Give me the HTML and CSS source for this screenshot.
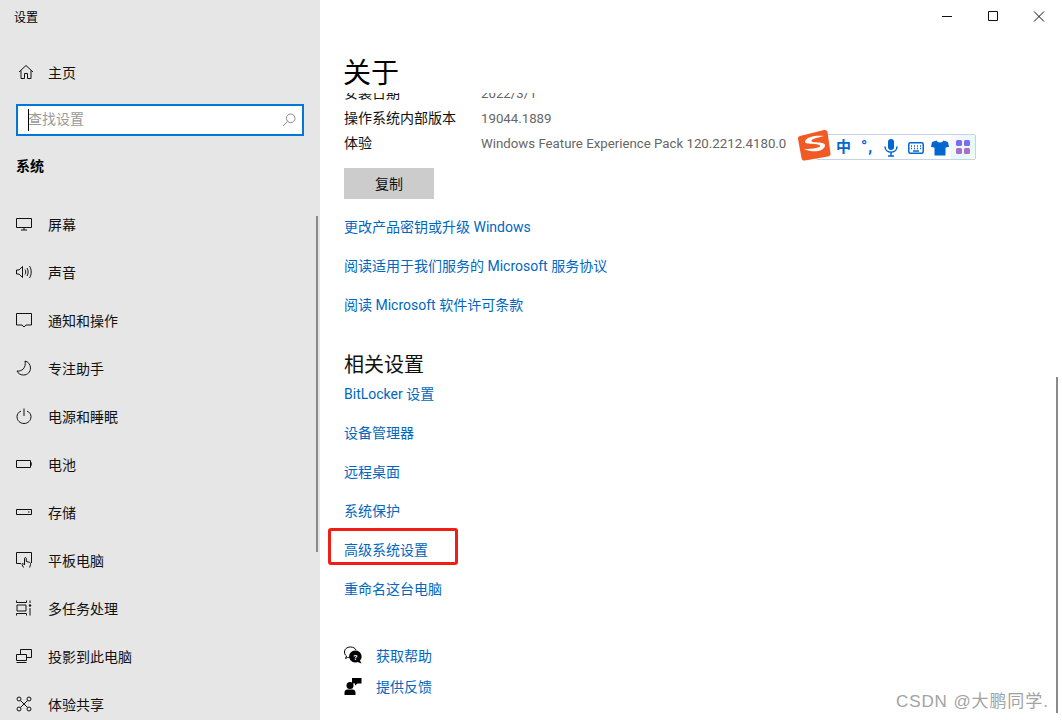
FILE: index.html
```html
<!DOCTYPE html>
<html lang="zh-CN">
<head>
<meta charset="utf-8">
<title>设置</title>
<link rel="stylesheet" href="styles.css">
</head>
<body>
<div class="app">
  <aside class="sidebar">
    <div class="app-title">设置</div>
    <a class="nav-item home">
      <svg class="icon" viewBox="0 0 16 16"><path d="M1 8 8 1.500 15 8M3 6.500V14.500H6.500V9.500H9.500V14.500H13V6.500"/></svg>
      <span>主页</span>
    </a>
    <div class="search">
      <span class="caret"></span>
      <span class="placeholder">查找设置</span>
      <svg class="search-icon" viewBox="0 0 14 14"><circle cx="8.700" cy="5.300" r="4.300"/><path d="M5.600 8.400 1 13"/></svg>
    </div>
    <div class="section-title">系统</div>
    <nav class="nav-list">
      <a class="nav-item"><svg class="icon" viewBox="0 0 16 16"><path d="M.5 2.500H15.500V11.500H.5ZM8 11.500V14M5 14H11"/></svg><span>屏幕</span></a>
      <a class="nav-item"><svg class="icon" viewBox="0 0 16 16"><path d="M.5 6H3L6.500 2.500V13.500L3 10H.5ZM9 5.500C10 7 10 9 9 10.500M11 4C12.500 6.500 12.500 9.500 11 12M13.500 2C15.800 5.500 15.800 10.500 13.500 14"/></svg><span>声音</span></a>
      <a class="nav-item"><svg class="icon" viewBox="0 0 16 16"><path d="M.5 1.500H15.500V13H10L8 15 6 13H.5Z"/></svg><span>通知和操作</span></a>
      <a class="nav-item"><svg class="icon" viewBox="0 0 16 16"><path d="M9 1C12 1.500 14.500 4.500 14.500 8 14.500 12 11.500 15 7.500 15 4.500 15 2 13.500 1 11 5.500 11.800 10.500 8 9 1Z"/></svg><span>专注助手</span></a>
      <a class="nav-item"><svg class="icon" viewBox="0 0 16 16"><path d="M5 3C2.500 4.200 1 6.300 1 8.700 1 12.500 4.100 15.500 8 15.500S15 12.500 15 8.700C15 6.300 13.500 4.200 11 3M8 .5V8"/></svg><span>电源和睡眠</span></a>
      <a class="nav-item"><svg class="icon" viewBox="0 0 16 16"><path d="M.5 4.500H14.500V11.500H.5ZM14.500 7H16V9H14.500"/></svg><span>电池</span></a>
      <a class="nav-item"><svg class="icon" viewBox="0 0 16 16"><path d="M.5 5.500H15.500V10.500H.5ZM12 8H13.500"/></svg><span>存储</span></a>
      <a class="nav-item"><svg class="icon" viewBox="0 0 16 16"><path d="M5 11.500H.5V.5H15.500V11M7.500 15.500 6 12.500C5.700 11.500 6.800 11 7.500 11.800L8.500 13V6.500C8.500 5.300 10.300 5.300 10.300 6.500V9.500L13.500 10.300C14.500 10.600 14.700 11.500 14.500 12.500L13.700 15.500"/></svg><span>平板电脑</span></a>
      <a class="nav-item"><svg class="icon" viewBox="0 0 16 16"><path d="M.5 .5V2.500H10.500V.5M.5 15.500V13.500H10.500V15.500M1 5H10V11H1ZM14 .5V3M14 8V15.500"/><circle class="dot" cx="14" cy="5.500" r="1.200"/></svg><span>多任务处理</span></a>
      <a class="nav-item"><svg class="icon" viewBox="0 0 16 16"><path d="M4.500 6V1.500H15.500V9.500H11M.5 6.500H10.500V12.500H.5ZM.5 14.500H10.500"/></svg><span>投影到此电脑</span></a>
      <a class="nav-item"><svg class="icon" viewBox="0 0 16 16"><circle cx="3" cy="3" r="2"/><circle cx="13" cy="3" r="2"/><circle cx="3" cy="13" r="2"/><circle cx="13" cy="13" r="2"/><path d="M4.500 4.500 11.500 11.500M11.500 4.500 4.500 11.500"/></svg><span>体验共享</span></a>
    </nav>
  </aside>

  <main class="content">
    <div class="window-controls">
      <svg class="win-btn" viewBox="0 0 46 32"><path d="M18 16.500H28"/></svg>
      <svg class="win-btn" viewBox="0 0 46 32"><path d="M18.500 11.500H27.500V20.500H18.500Z"/></svg>
      <svg class="win-btn" viewBox="0 0 46 32"><path d="M18 11.500 28 21.500M28 11.500 18 21.500"/></svg>
    </div>
    <h1 class="page-title">关于</h1>
    <div class="scroller">
      <dl class="specs">
        <div class="spec"><dt>安装日期</dt><dd>2022/3/1</dd></div>
        <div class="spec"><dt>操作系统内部版本</dt><dd>19044.1889</dd></div>
        <div class="spec"><dt>体验</dt><dd>Windows Feature Experience Pack 120.2212.4180.0</dd></div>
      </dl>
      <div class="copy-btn">复制</div>
      <ul class="links">
        <li>更改产品密钥或升级 Windows</li>
        <li>阅读适用于我们服务的 Microsoft 服务协议</li>
        <li>阅读 Microsoft 软件许可条款</li>
      </ul>
      <h2 class="section-heading">相关设置</h2>
      <ul class="links related">
        <li>BitLocker 设置</li>
        <li>设备管理器</li>
        <li>远程桌面</li>
        <li>系统保护</li>
        <li>高级系统设置</li>
        <li>重命名这台电脑</li>
      </ul>
      <div class="help-list">
        <a class="help-item">
          <svg class="help-icon" viewBox="0 0 18 18"><path class="outline" d="M8 10.500C7 11 5 11.500 3.500 11.500L1.500 12.500 2.500 10C1 9 .5 7.500 .5 6 .5 3 3 1 6.500 1 9 1 11 2 12 4"/><path d="M11.500 4.500A6 6 0 0 1 16 14.500L17.500 17.500 13.500 16A6 6 0 1 1 11.500 4.500Z"/><text class="q" x="11.500" y="14">?</text></svg>
          <span>获取帮助</span>
        </a>
        <a class="help-item">
          <svg class="help-icon" viewBox="0 0 18 18"><circle cx="6" cy="8.500" r="3.500"/><path d="M.5 18V15.500C.5 13.500 2 12.500 3.500 12.500H8.500C10 12.500 11.500 13.500 11.500 15.500V18ZM8 1H17.500V6.500H13.500L11 8.500V6.500H8Z"/></svg>
          <span>提供反馈</span>
        </a>
      </div>
    </div>
  </main>
</div>

<div class="sidebar-scroll"></div>
<div class="main-scroll"></div>
<div class="annotation"></div>

<div class="ime">
  <svg class="ime-logo" viewBox="0 0 34 32"><path class="ime-logo-bg" d="M3 7 27 1C29 .6 30 1.200 30.500 3L33.500 24C33.800 26 33 27 31 27.500L8 31.500C6 31.800 5 31 4.500 29L1 10C.6 8.500 1.500 7.500 3 7Z"/><path class="ime-logo-s" d="M27 7C19 6 9 8 8 12.500 7.200 16 21 14 23 16.500 24.500 18.500 16 20 7 20 15 24 27 23 28 16.500 28.500 12 15 14.500 14.500 12 14 10 21 8.500 27 7Z"/></svg>
  <span class="ime-zh">中</span>
  <span class="ime-punc">°,</span>
  <svg class="ime-icon" viewBox="0 0 16 18"><rect class="fill" x="5" y="0" width="6" height="11" rx="3"/><path d="M2 7.500C2 15 14 15 14 7.500M8 13V17M5 17H11"/></svg>
  <svg class="ime-icon wide" viewBox="0 0 16 14"><rect x=".8" y="1.800" width="14.400" height="10.400" rx="1.500"/><path d="M3 5H4M6 5H7M9 5H10M12 5H13M3 7.500H4M6 7.500H7M9 7.500H10M12 7.500H13M5 10H11"/></svg>
  <svg class="ime-icon" viewBox="0 0 18 16"><path class="fill" d="M5.500 .5 1 2 0 7 3.500 7.500V15.500H14.500V7.500L18 7 17 2 12.500 .5C11.500 3 6.500 3 5.500 .5Z"/></svg>
  <span class="ime-apps">
    <svg viewBox="0 0 14 14"><rect class="a1" x="0" y="0" width="6" height="6" rx="1.500"/><rect class="a1" x="8" y="0" width="6" height="6" rx="1.500"/><rect class="a2" x="0" y="8" width="6" height="6" rx="1.500"/><rect class="a2" x="8" y="8" width="6" height="6" rx="1.500"/></svg>
  </span>
</div>

<div class="watermark">CSDN @大鹏同学.</div>
</body>
</html>
```
FILE: styles.css
```css
* { box-sizing: border-box; }
html, body { margin: 0; height: 100%; overflow: hidden; background: #fff; }
body { font-family: Roboto, "Noto Sans CJK SC", sans-serif; font-size: 14px; color: #000; }
.app { display: flex; height: 720px; }

/* sidebar */
.sidebar { width: 320px; flex: none; background: #e6e6e6; padding-left: 16px; overflow: hidden; }
.app-title { font-size: 12px; line-height: 16px; padding-top: 10px; margin-left: -2px; height: 25px; }
.nav-item { display: flex; align-items: center; height: 48px; color: #111; }
.nav-item span { margin-left: 16px; }
.nav-item .icon { width: 16px; height: 16px; flex: none; fill: none; stroke: #111; stroke-width: 1; }
.icon .dot { fill: #111; stroke: none; }
.home { margin-top: 23px; height: 48px; margin-left: 2px; }
.home span { margin-left: 14px; }
.search { position: relative; display: flex; align-items: center; width: 288px; height: 32px; margin-top: 8px; background: #fff; border: 2px solid #0078d7; padding: 0 0 4px 10px; }
.caret { position: absolute; left: 10px; top: 3px; width: 1px; height: 22px; background: #000; }
.placeholder { color: #9a9a9a; }
.search-icon { position: absolute; right: 6px; top: 7px; width: 14px; height: 14px; fill: none; stroke: #8a8a8a; stroke-width: 1; }
.section-title { font-weight: 700; margin-top: 20px; line-height: 20px; }
.nav-list { padding-top: 24px; }

/* main */
.content { position: relative; flex: 1; min-width: 0; padding-left: 24px; overflow: hidden; display: flex; flex-direction: column; }
.window-controls { position: absolute; right: 0; top: 0; display: flex; }
.win-btn { width: 46px; height: 32px; fill: none; stroke: #111; stroke-width: 1; }
.page-title { margin: 0 0 0 -1px; height: 93px; padding-top: 54px; font-size: 28px; font-weight: 400; line-height: 39px; flex: none; }
.scroller { flex: 1; overflow: hidden; }
.specs { margin: -13px 0 0; }
.spec { display: flex; height: 25px; align-items: center; }
.spec dt { width: 137px; padding-bottom: 2px; color: #111; }
.spec dd { margin: 0; padding-top: 1px; color: #666; white-space: nowrap; font-size: 13.250px; }
.copy-btn { display: flex; align-items: center; justify-content: center; width: 90px; height: 31px; margin-top: 13px; padding-bottom: 2px; background: #ccc; color: #111; }
.links { list-style: none; margin: 9px 0 0; padding: 0; color: #0067c0; }
.links li { height: 39px; line-height: 39px; white-space: nowrap; }
.section-heading { margin: 26px 0 0; font-size: 20px; font-weight: 400; line-height: 28px; color: #111; }
.links.related { margin-top: -4px; }
.help-list { margin-top: 30px; color: #0067c0; }
.help-item { display: flex; align-items: center; height: 31px; }
.help-icon { width: 18px; height: 18px; flex: none; fill: #000; }
.help-icon .outline { fill: none; stroke: #000; }
.help-icon .q { fill: #fff; font-size: 8px; font-weight: 700; text-anchor: middle; }
.help-item span { margin-left: 14px; }

/* overlays */
.sidebar-scroll { position: absolute; left: 316px; top: 216px; width: 2px; height: 336px; background: #8a8a8a; }
.main-scroll { position: absolute; left: 1056px; top: 377px; width: 2px; height: 336px; background: #8a8a8a; }
.annotation { position: absolute; left: 328px; top: 528px; width: 130px; height: 37px; border: 3px solid #f01e14; border-radius: 3px; }

.ime { position: absolute; left: 816px; top: 134px; width: 160px; height: 26px; display: flex; align-items: center; background: #fff; border: 1px solid #c3d3e8; border-radius: 2px; color: #0067d0; }
.ime-logo { position: absolute; left: -20px; top: -6px; width: 34px; height: 32px; }
.ime-logo-bg { fill: #f15a24; }
.ime-logo-s { fill: #fff; }
.ime-zh { position: absolute; left: 19px; top: 2px; font-size: 15px; line-height: 20px; font-weight: 700; }
.ime-punc { position: absolute; left: 44px; top: 0; font-size: 16px; line-height: 24px; font-weight: 700; letter-spacing: 1px; }
.ime-icon { position: absolute; top: 4px; width: 16px; height: 18px; left: 66px; fill: none; stroke: #0067d0; stroke-width: 1.500; }
.ime-icon .fill { fill: #0067d0; stroke: none; }
.ime-icon.wide { left: 91px; top: 6px; height: 14px; }
.ime-icon.wide + .ime-icon { left: 114px; width: 18px; top: 5px; height: 16px; }
.ime-apps { position: absolute; right: 0; top: 0; width: 24px; height: 24px; padding: 5px; background: linear-gradient(135deg, #fbf7fe, #e4f8f6 70%, #fbfdf2); }
.ime-apps svg { display: block; width: 14px; height: 14px; }
.a1 { fill: #7d6cf0; }
.a2 { fill: #a66fc8; }

.watermark { position: absolute; left: 896px; top: 690px; font-family: "Liberation Sans", "Noto Sans CJK SC", sans-serif; font-size: 17px; line-height: 24px; color: #a3a3a3; white-space: nowrap; letter-spacing: .9px; }
```
